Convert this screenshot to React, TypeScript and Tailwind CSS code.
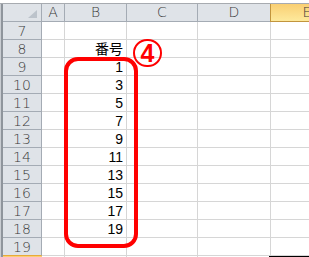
const cols = ["A", "B", "C", "D", "E"];
const widths = ["w-[23px]", "w-[62px]", "w-[71px]", "w-[73px]", "w-[73px]"];
const rows = [7, 8, 9, 10, 11, 12, 13, 14, 15, 16, 17, 18, 19];
const values: Record<number, string> = {
  8: "番号",
  9: "1",
  10: "3",
  11: "5",
  12: "7",
  13: "9",
  14: "11",
  15: "13",
  16: "15",
  17: "17",
  18: "19",
};

export default function App() {
  return (
    <div className="relative w-[309px] h-[257px] overflow-hidden bg-white font-['Liberation_Sans','Noto_Sans_CJK_JP',sans-serif]">
      <div className="h-[4px] bg-white border-b border-[#a7abb0]" />
      <div className="flex">
        <div className="w-[3px] shrink-0 flex">
          <div className="w-[1px] bg-[#c9cdd2]" />
          <div className="w-[2px] bg-[#8f959c]" />
        </div>
        <div className="flex flex-col shrink-0">
          {/* column headers */}
          <div className="flex h-[18px]">
            <div className="relative shrink-0 w-[39px] h-full bg-[#dfe3e8] border-r border-b border-[#a4abb4]">
              <svg className="absolute right-[4px] bottom-[3px]" width="9" height="8" viewBox="0 0 9 8">
                <polygon points="9,0 9,8 0,8" fill="#bcc3cb" />
              </svg>
            </div>
            {cols.map((c, i) =>
              c === "E" ? (
                <div
                  key={c}
                  className={`${widths[i]} shrink-0 h-full bg-gradient-to-b from-[#f9cf72] to-[#fde99c] border-b border-[#c2953d] border-l border-l-[#c2953d] -ml-[1px] flex items-center justify-center text-[#3a3a3a] text-[14px] font-['DejaVu_Sans',sans-serif] font-extralight`}
                >
                  {c}
                </div>
              ) : (
                <div
                  key={c}
                  className={`${widths[i]} shrink-0 h-full bg-[#dfe3e8] border-r border-b border-[#a4abb4] flex items-center justify-center text-[14px] text-[#3a3a3a] font-['DejaVu_Sans',sans-serif] font-extralight`}
                >
                  {c}
                </div>
              )
            )}
          </div>
          {rows.map((r) => (
            <div key={r} className="flex h-[18px]">
              <div
                className={`w-[39px] shrink-0 h-full bg-[#dfe3e8] border-r border-[#a4abb4] border-b ${
                  r === 19 ? "border-b-[#e9a93a]" : "border-b-[#a4abb4]"
                } flex items-end justify-center text-[14px] leading-[16px] text-[#3a3a3a] font-['DejaVu_Sans',sans-serif] font-extralight`}
              >
                {r}
              </div>
              {cols.map((c, i) => (
                <div
                  key={c}
                  className={`${widths[i]} shrink-0 h-full border-r border-b border-[#d6d6d6] flex items-end justify-end pr-[3px] text-[14px] leading-[16px] text-black`}
                >
                  {c === "B" ? values[r] ?? "" : ""}
                </div>
              ))}
            </div>
          ))}
          <div className="flex h-[18px]">
            <div className="w-[39px] shrink-0 h-full bg-gradient-to-b from-[#f9cf72] to-[#fde99c]" />
            <div className="w-[23px] shrink-0 border-r border-[#d6d6d6]" />
            <div className="w-[62px] shrink-0 border-r border-[#d6d6d6]" />
            <div className="w-[71px] shrink-0 border-r border-[#d6d6d6]" />
            <div className="w-[73px] shrink-0" />
            <div className="w-[76px] shrink-0 -ml-[2px] border-t-[3px] border-l-[3px] border-black" />
          </div>
        </div>
      </div>

      {/* red rounded frame */}
      <div className="absolute left-[64px] top-[57px] w-[74px] h-[191px] rounded-[14px] border-[4px] border-[#ff0000]" />
      {/* circled 4 */}
      <div className="absolute left-[133px] top-[39px] w-[29px] h-[28px] rounded-full border-2 border-[#ff0000] flex items-center justify-center text-[#ff0000] font-bold text-[25px] leading-none font-['Liberation_Sans',sans-serif]">
        4
      </div>
    </div>
  );
}
